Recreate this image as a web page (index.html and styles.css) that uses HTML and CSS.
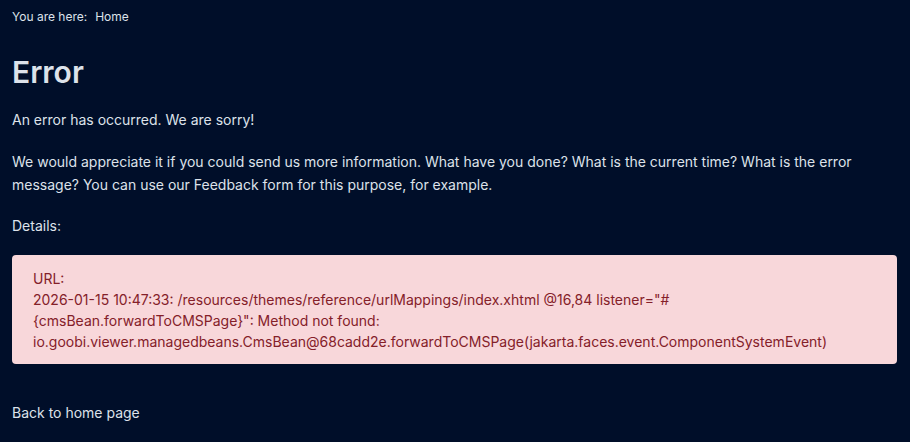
FILE: index.html
```html
<!DOCTYPE html>
<html lang="en">
<head>
<meta charset="utf-8">
<title>Error</title>
<link rel="stylesheet" href="styles.css">
</head>
<body>
<div class="page">
  <nav class="breadcrumb"><span class="label">You are here:</span><a class="crumb" href="#">Home</a></nav>
  <h1 class="title">Error</h1>
  <p class="text lead">An error has occurred. We are sorry!</p>
  <p class="text">We would appreciate it if you could send us more information. What have you done? What is the current time? What is the error message? You can use our Feedback form for this purpose, for example.</p>
  <p class="text">Details:</p>
  <div class="alert">
    <div>URL:</div>
    <div>2026-01-15 10:47:33: /resources/themes/reference/urlMappings/index.xhtml @16,84 listener="#{cmsBean.forwardToCMSPage}": Method not found: io.goobi.viewer.managedbeans.CmsBean@68cadd2e.forwardToCMSPage(jakarta.faces.event.ComponentSystemEvent)</div>
  </div>
  <a class="back" href="#">Back to home page</a>
</div>
</body>
</html>
```
FILE: styles.css
```css
html, body {
  margin: 0;
  padding: 0;
  background: #000e29;
}
body {
  font-family: Inter, "Noto Sans", sans-serif;
  color: #dde2ea;
  font-size: 14px;
  line-height: 23px;
}
.page {
  padding: 5px 13px 20px 12px;
}
.breadcrumb {
  font-size: 12px;
  line-height: 24px;
}
.breadcrumb .label {
  margin-right: 8px;
}
.crumb {
  color: #dde2ea;
  text-decoration: none;
}
.title {
  font-size: 30px;
  font-weight: 600;
  line-height: 36px;
  margin: 25px 0 18px;
}
.text {
  margin: 0 0 18px;
}
.text.lead {
  margin-bottom: 19px;
}
.alert {
  background: #f8d7da;
  color: #842029;
  border-radius: 4px;
  padding: 13px 21px 12px;
  line-height: 21px;
  margin: 0 0 37px;
}
.back {
  color: #dde2ea;
  text-decoration: none;
}
```
